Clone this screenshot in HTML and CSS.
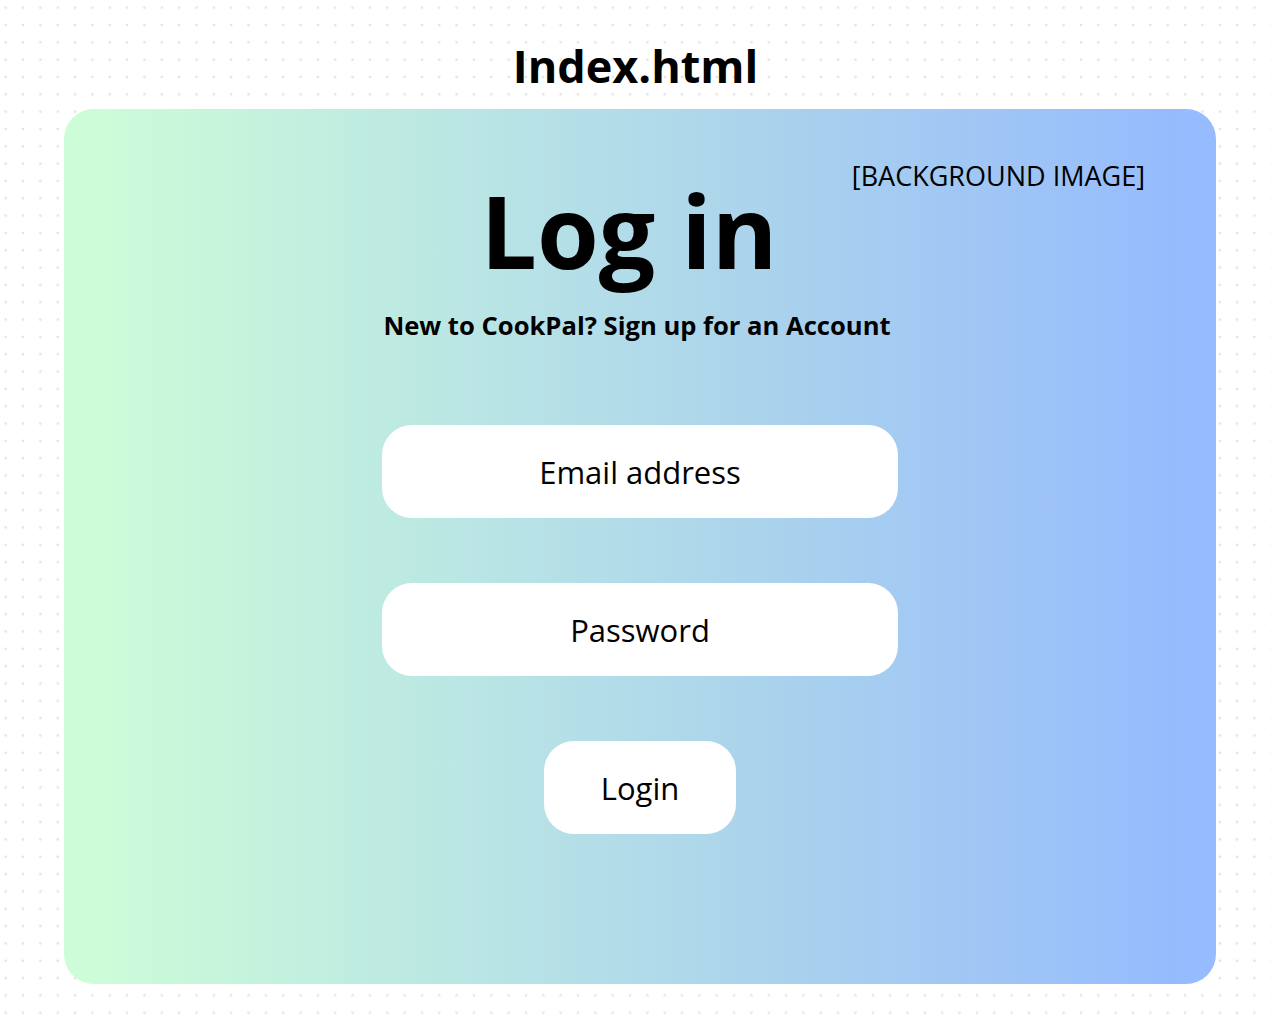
FILE: index.html
```html
<!DOCTYPE html>
<html lang="en">
<head>
<meta charset="utf-8">
<title>Index.html</title>
<link rel="stylesheet" href="styles.css">
</head>
<body>
<div class="page">
  <h1 class="page-title">Index.html</h1>
  <main class="card">
    <span class="bg-label">[BACKGROUND IMAGE]</span>
    <h2 class="login-title">Log in</h2>
    <p class="signup">New to CookPal? Sign up for an Account</p>
    <form class="form">
      <div class="field">Email address</div>
      <div class="field">Password</div>
      <button type="button" class="btn">Login</button>
    </form>
  </main>
</div>
</body>
</html>
```
FILE: styles.css
```css
html, body {
  margin: 0;
  padding: 0;
}
body {
  width: 1271px;
  height: 1029px;
  overflow: hidden;
  background-color: #ffffff;
  background-image: radial-gradient(circle, #e3e3ea 1.3px, transparent 1.6px);
  background-size: 17.35px 17.33px;
  background-position: -3px -1px;
  font-family: "Open Sans", "Noto Sans", sans-serif;
  color: #000;
}
.page {
  display: flex;
  flex-direction: column;
  padding-top: 36px;
}
.page-title {
  margin: 0 0 13px 0;
  text-align: center;
  font-size: 45px;
  line-height: 60px;
  font-weight: 700;
}
.card {
  position: relative;
  margin-left: 64px;
  width: 1152px;
  height: 875px;
  border-radius: 30px;
  background: linear-gradient(90deg, #ccfcd8 3%, #b7e2e6 40%, #a8d0ee 65%, #96bbfe 97%);
  display: flex;
  flex-direction: column;
  align-items: center;
  padding-top: 66px;
  box-sizing: border-box;
}
.bg-label {
  position: absolute;
  top: 50px;
  right: 71px;
  font-size: 27px;
  line-height: 34px;
  font-weight: 400;
}
.login-title {
  margin: 0 22px 0 0;
  font-size: 100px;
  line-height: 110px;
  font-weight: 700;
}
.signup {
  margin: 26px 6px 0 0;
  font-size: 25.6px;
  line-height: 30px;
  font-weight: 700;
}
.form {
  margin-top: 84px;
  display: flex;
  flex-direction: column;
  align-items: center;
  gap: 65px;
}
.field, .btn {
  box-sizing: border-box;
  height: 93px;
  border-radius: 30px;
  background: #fff;
  display: flex;
  align-items: center;
  justify-content: center;
  font-family: "Open Sans", sans-serif;
  font-size: 31px;
  color: #000;
}
.field {
  width: 516px;
}
.btn {
  width: 192px;
  border: none;
  padding: 0;
}
```
